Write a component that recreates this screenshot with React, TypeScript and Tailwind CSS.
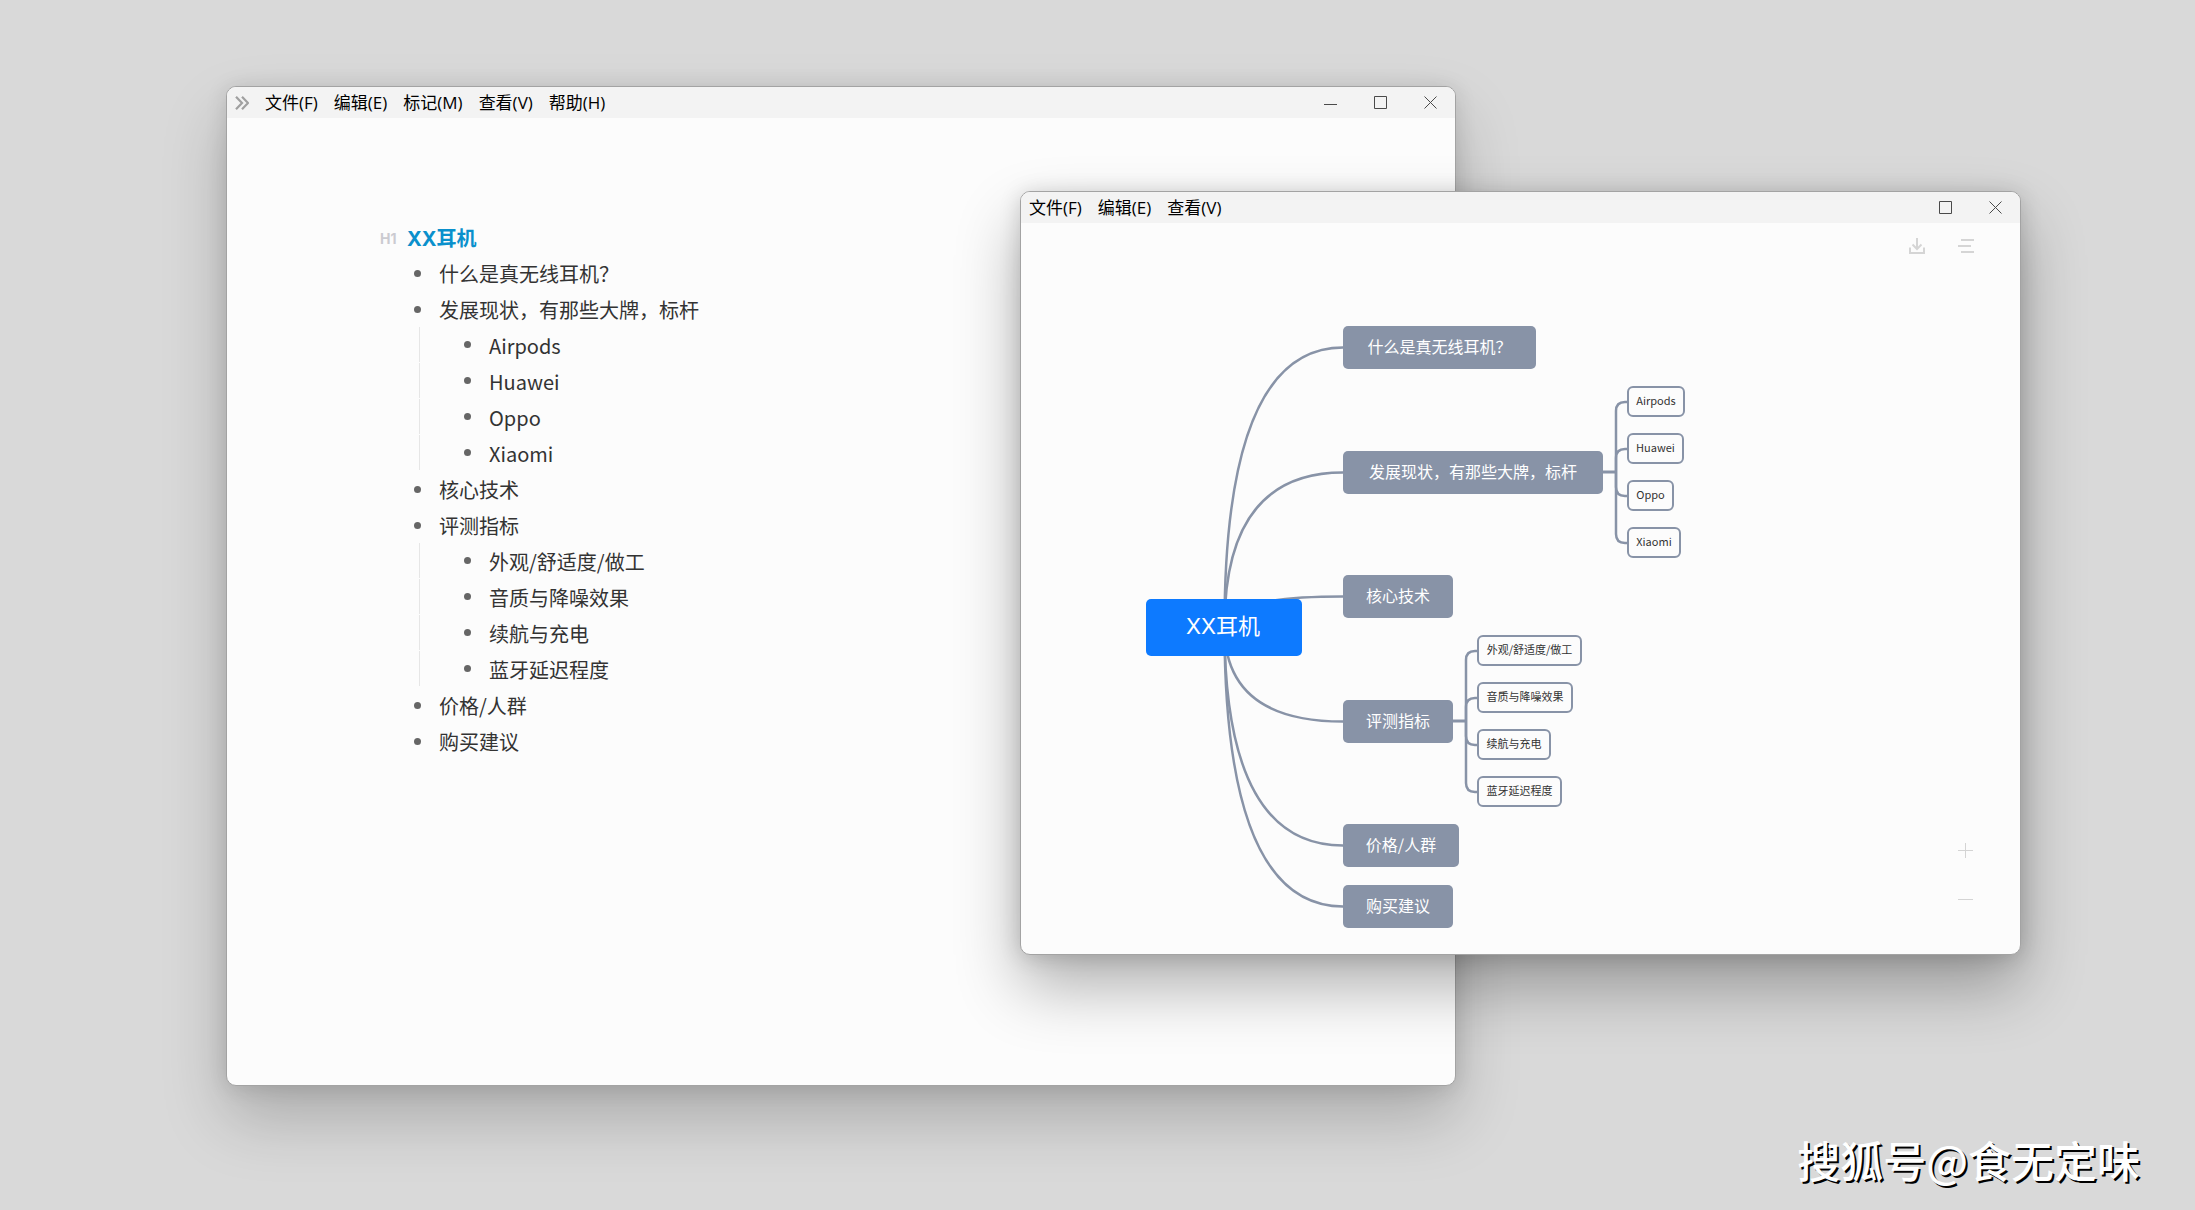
import React from 'react';
import { clsx, type ClassValue } from 'clsx';
import { twMerge } from 'tailwind-merge';

function cn(...inputs: ClassValue[]) {
  return twMerge(clsx(inputs));
}

interface OutlineItem {
  text: string;
  children?: string[];
}

const OUTLINE: OutlineItem[] = [
  { text: '什么是真无线耳机？' },
  { text: '发展现状，有那些大牌，标杆', children: ['Airpods', 'Huawei', 'Oppo', 'Xiaomi'] },
  { text: '核心技术' },
  { text: '评测指标', children: ['外观/舒适度/做工', '音质与降噪效果', '续航与充电', '蓝牙延迟程度'] },
  { text: '价格/人群' },
  { text: '购买建议' },
];

// x/y are relative to the mind map canvas
const ROOT = { x: 125, y: 376, w: 156, h: 57 };

const TOPICS = [
  { text: '什么是真无线耳机？', x: 322, y: 103, w: 193 },
  { text: '发展现状，有那些大牌，标杆', x: 322, y: 228, w: 260 },
  { text: '核心技术', x: 322, y: 352, w: 110 },
  { text: '评测指标', x: 322, y: 477, w: 110 },
  { text: '价格/人群', x: 322, y: 601, w: 116 },
  { text: '购买建议', x: 322, y: 662, w: 110 },
];

const LEAVES = [
  { text: 'Airpods', x: 606, y: 163, w: 58 },
  { text: 'Huawei', x: 606, y: 210, w: 57 },
  { text: 'Oppo', x: 606, y: 257, w: 47 },
  { text: 'Xiaomi', x: 606, y: 304, w: 54 },
  { text: '外观/舒适度/做工', x: 456, y: 412, w: 105 },
  { text: '音质与降噪效果', x: 456, y: 459, w: 96 },
  { text: '续航与充电', x: 456, y: 506, w: 74 },
  { text: '蓝牙延迟程度', x: 456, y: 553, w: 85 },
];

const BRANCHES = [
  { from: 582, trunk: 595, y: 249, ends: [179, 226, 273, 320] },
  { from: 432, trunk: 445, y: 498, ends: [428, 475, 522, 569] },
];

const Menu = ({ items }: { items: string[] }) => (
  <nav className="flex h-full font-['Open_Sans','Noto_Sans_CJK_SC',sans-serif] text-[17px] leading-none text-black">
    {items.map((item) => (
      <button key={item} type="button" className="h-full px-2 pb-px hover:bg-black/5">
        {item}
      </button>
    ))}
  </nav>
);

const WindowButton = ({ label, d }: { label: string; d: string }) => (
  <button type="button" aria-label={label} className="flex h-full w-[50px] items-center justify-center hover:bg-black/5">
    <svg width="13" height="13" viewBox="0 0 13 13" fill="none" stroke="#4a4a4a" strokeWidth="1">
      <path d={d} />
    </svg>
  </button>
);

const Maximize = () => <WindowButton label="最大化" d="M.5 .5H12.5V12.5H.5Z" />;
const Close = () => <WindowButton label="关闭" d="M.5 .5L12.5 12.5M12.5 .5L.5 12.5" />;

const TitleBar = ({ children }: { children: React.ReactNode }) => (
  <header className="flex h-[31px] shrink-0 items-center bg-[#f3f3f3]">{children}</header>
);

const Window = ({ className, children }: { className?: string; children: React.ReactNode }) => (
  <section className={cn('absolute flex flex-col overflow-hidden rounded-[10px] border bg-[#fcfcfc]', className)}>
    {children}
  </section>
);

const Bullet = () => <span className="size-[7px] shrink-0 rounded-full bg-[#666]" />;

const Outline = () => (
  <article className="pt-[101px] pl-[153px] text-xl text-[#333]">
    <div className="flex h-9 items-center gap-2 pt-1 font-['Inter','Noto_Sans_CJK_SC',sans-serif]">
      <span className="w-[19px] text-sm font-bold text-[#cbcbd1]">H1</span>
      <h1 className="font-bold text-[#0a90cc]">XX耳机</h1>
    </div>
    <ul>
      {OUTLINE.map((item) => (
        <li key={item.text}>
          <div className="flex h-9 items-center gap-[18px] pl-[34px]">
            <Bullet />
            <span className="pt-0.5">{item.text}</span>
          </div>
          {item.children && (
            <ul className="ml-[39px]">
              {item.children.map((child) => (
                <li key={child} className="mb-px flex h-[35px] items-center gap-[18px] border-l border-[#e6e6e6] pl-[44px]">
                  <Bullet />
                  <span className="pt-0.5">{child}</span>
                </li>
              ))}
            </ul>
          )}
        </li>
      ))}
    </ul>
  </article>
);

const Links = () => {
  const cx = 203.5;
  const cy = 404;
  return (
    <svg className="absolute inset-0 h-full w-full" fill="none" stroke="#8893a7" strokeWidth="2.5">
      {TOPICS.map((t) => (
        <path key={t.text} d={`M${cx} ${cy}Q${cx} ${t.y + 21.5} ${t.x} ${t.y + 21.5}`} />
      ))}
      {BRANCHES.map((b) => (
        <g key={b.y}>
          <path d={`M${b.from} ${b.y}H${b.trunk}`} strokeWidth="3" />
          {b.ends.map((end) => {
            const bend = end < b.y ? end + 9 : end - 9;
            return <path key={end} d={`M${b.trunk} ${b.y}V${bend}Q${b.trunk} ${end} ${b.trunk + 9} ${end}H${b.trunk + 12}`} />;
          })}
        </g>
      ))}
    </svg>
  );
};

const MindMap = () => (
  <div className="relative flex-1">
    <Links />
    <div
      className="absolute flex items-center justify-center rounded-[5px] bg-[#0d7aff] pr-0.5 pb-[3px] font-['Inter','Noto_Sans_CJK_SC',sans-serif] text-[22px] text-white"
      style={{ left: ROOT.x, top: ROOT.y, width: ROOT.w, height: ROOT.h }}
    >
      XX耳机
    </div>
    {TOPICS.map((t) => (
      <div
        key={t.text}
        className="absolute flex h-[43px] items-center justify-center rounded-[5px] bg-[#8893a7] pb-[3px] text-base whitespace-nowrap text-white"
        style={{ left: t.x, top: t.y, width: t.w }}
      >
        {t.text}
      </div>
    ))}
    {LEAVES.map((l) => (
      <div
        key={l.text}
        className="absolute flex h-[31px] items-center justify-center rounded-md border-2 border-[#8893a7] bg-[#fcfcfc] pb-[3px] text-[11px] whitespace-nowrap text-[#333]"
        style={{ left: l.x, top: l.y, width: l.w }}
      >
        {l.text}
      </div>
    ))}

    <div className="absolute top-[14px] right-[45px] flex gap-[31px] text-[#d5d5d5]">
      <button type="button" aria-label="导出" className="size-[18px]">
        <svg width="18" height="18" viewBox="0 0 18 18" fill="none" stroke="currentColor" strokeWidth="2">
          <path d="M9 1V12M4.5 7.5L9 12L13.5 7.5M2 10.5V16H16V10.5" />
        </svg>
      </button>
      <button type="button" aria-label="布局" className="size-[18px]">
        <svg width="18" height="18" viewBox="0 0 18 18" fill="none" stroke="currentColor" strokeWidth="2">
          <path d="M4 3H17M1 9H14M4 15H17" />
        </svg>
      </button>
    </div>

    <div className="absolute right-[47px] bottom-[47px] flex flex-col gap-[34px] text-[#d4d4d4]">
      <button type="button" aria-label="放大" className="size-[15px]">
        <svg width="15" height="15" viewBox="0 0 15 15" stroke="currentColor">
          <path d="M7.5 0V15M0 7.5H15" />
        </svg>
      </button>
      <button type="button" aria-label="缩小" className="size-[15px]">
        <svg width="15" height="15" viewBox="0 0 15 15" stroke="currentColor">
          <path d="M0 7.5H15" />
        </svg>
      </button>
    </div>
  </div>
);

export default function App() {
  return (
    <main
      lang="zh-CN"
      className="relative min-h-screen overflow-hidden bg-[#d9d9d9] font-['Noto_Sans_CJK_SC',sans-serif]"
    >
      <Window className="top-[86px] right-[739px] bottom-[124px] left-[226px] border-[#a3a3a3] shadow-[0_32px_64px_rgba(0,0,0,0.21),0_2px_21px_rgba(0,0,0,0.12)]">
        <TitleBar>
          <button type="button" aria-label="侧栏" className="flex h-full w-[30px] items-center justify-center">
            <svg width="14" height="14" viewBox="0 0 14 14" fill="none" stroke="#a0a0a0" strokeWidth="2.2">
              <path d="M1 .8L7 7L1 13.2M7 .8L13 7L7 13.2" />
            </svg>
          </button>
          <Menu items={['文件(F)', '编辑(E)', '标记(M)', '查看(V)', '帮助(H)']} />
          <div className="ml-auto flex h-full">
            <WindowButton label="最小化" d="M0 8.5H13" />
            <Maximize />
            <Close />
          </div>
        </TitleBar>
        <Outline />
      </Window>

      <Window className="top-[191px] right-[174px] bottom-[255px] left-[1020px] border-[#a3a3a3] shadow-[0_32px_64px_rgba(0,0,0,0.3),0_2px_21px_rgba(0,0,0,0.16)]">
        <TitleBar>
          <Menu items={['文件(F)', '编辑(E)', '查看(V)']} />
          <div className="ml-auto flex h-full">
            <Maximize />
            <Close />
          </div>
        </TitleBar>
        <MindMap />
      </Window>

      <p className="absolute right-[55px] bottom-[19px] text-[43px] font-medium text-white [text-shadow:2px_2px_0_#000]">
        搜狐号@食无定味
      </p>
    </main>
  );
}
